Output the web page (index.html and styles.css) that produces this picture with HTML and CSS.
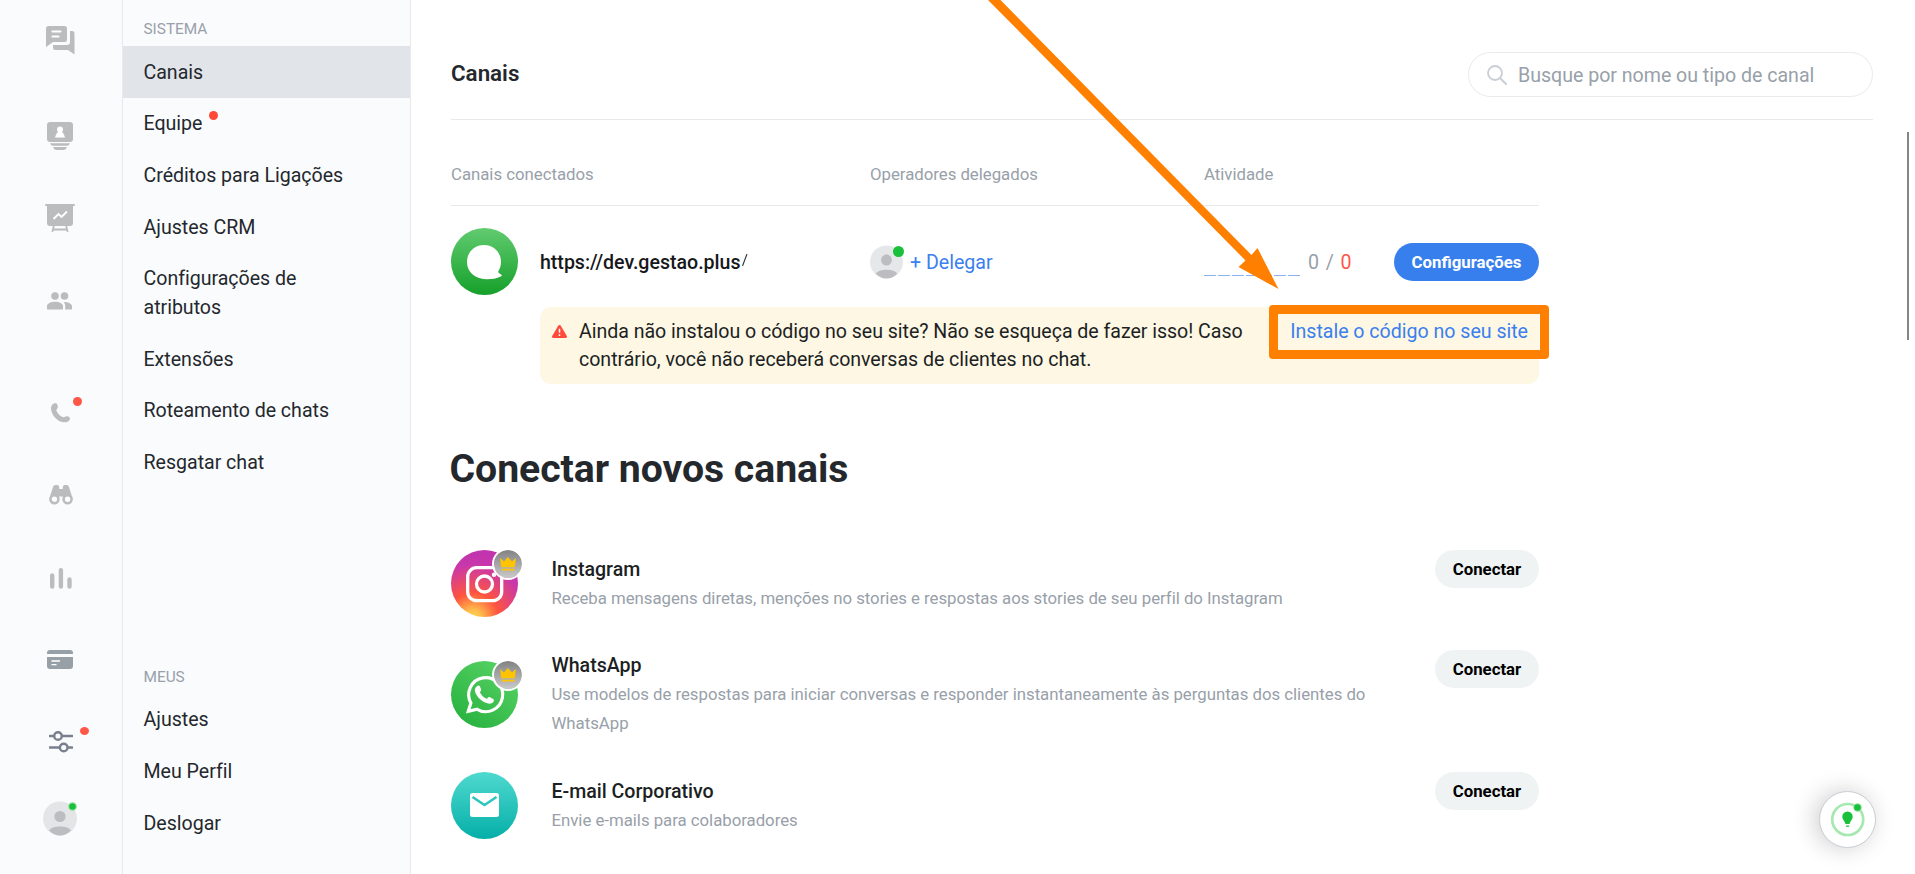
FILE: index.html
```html
<!DOCTYPE html>
<html lang="pt-BR">
<head>
<meta charset="utf-8">
<title>Canais</title>
<link rel="stylesheet" href="styles.css">
</head>
<body>
<div class="app">
  <nav class="rail">
    <a class="rail-item rail-chats"><svg width="30" height="30" viewBox="0 0 30 30"><path fill="#bbbcbe" d="M3.500 1h16a2.500 2.500 0 0 1 2.500 2.500v11a2.500 2.500 0 0 1-2.500 2.500H8L1 22V3.500A2.500 2.500 0 0 1 3.500 1Z"/><path d="M7.500 6.500h8M7.500 11.500h6" stroke="#fff" stroke-width="2.200" stroke-linecap="round"/><path fill="#bbbcbe" d="M25 6h2a2.500 2.500 0 0 1 2.500 2.500v21L23 25H10.500A2.500 2.500 0 0 1 8 22.500V20h14a3 3 0 0 0 3-3Z"/></svg></a>
    <a class="rail-item rail-contacts"><svg width="26" height="28" viewBox="0 0 26 28"><rect width="26" height="20" rx="3" fill="#bbbcbe"/><circle cx="13" cy="7.500" r="3" fill="#fff"/><path fill="#fff" d="M11 10h4q2.800 2.200 3 5.500H8q.2-3.300 3-5.500Z"/><path fill="#bbbcbe" d="M3 21.200h20q-1 2.600-3 2.600H6q-2 0-3-2.600ZM6 25h14q-1 3-3 3H9q-2 0-3-3Z"/></svg></a>
    <a class="rail-item rail-board"><svg width="30" height="28" viewBox="0 0 30 28"><rect width="30" height="2" rx="1" fill="#bbbcbe"/><path fill="#bbbcbe" d="M2 1h26v18a3 3 0 0 1-3 3H5a3 3 0 0 1-3-3Z"/><path d="m8.500 15 5-5 3 3 5.500-5.500" fill="none" stroke="#fff" stroke-width="1.900"/><path d="m9 21-1.600 7M21 21l1.600 7M8 25.500h14" stroke="#bbbcbe" stroke-width="1.800"/></svg></a>
    <a class="rail-item rail-team"><svg width="25" height="18" viewBox="0 0 25 18"><circle cx="8" cy="4" r="3.800" fill="#bbbcbe"/><circle cx="17.500" cy="4" r="3.800" fill="#bbbcbe"/><path fill="#bbbcbe" d="M0 17.500V14c0-2.700 4.600-4.200 8-4.200s8 1.500 8 4.200v3.500ZM17 10c3.500 0 8 1.500 8 4.200v3.300h-6.800V14c0-1.800-.6-3-1.800-4Z"/></svg></a>
    <a class="rail-item rail-phone"><svg width="20" height="20" viewBox="0 0 20 20"><path fill="#bbbcbe" d="M4.300.3c1.200 0 2 .8 2.400 2.400.3 1.300.1 2.300-.7 3.200-.7.800-.8 1.400-.2 2.500 1.300 2.400 3.200 4.200 5.700 5.500 1 .5 1.600.4 2.300-.2 1-.7 2.100-.7 3.300-.3 1.600.6 2.300 1.600 1.700 3-.6 1.800-2.600 2.900-5 2.900C7 19.300.2 12.500 0 5.500 0 2.800 1.800.2 4.300.3Z"/></svg><i class="dot dot-phone"></i></a>
    <a class="rail-item rail-visitors"><svg width="24" height="20" viewBox="0 0 24 20"><path fill="#bbbcbe" d="M4 2A2.600 2.600 0 0 1 6.500 0h1.300a2.300 2.300 0 0 1 2.400 2v2h3.600V2a2.300 2.300 0 0 1 2.400-2h1.300A2.600 2.600 0 0 1 20 2l3.300 10.500L18.500 15 14 12.500V11.500h-4v1L5.500 15 .7 12.500Z"/><circle cx="5.400" cy="14.200" r="4" fill="#fff" stroke="#bbbcbe" stroke-width="2.600"/><circle cx="18.600" cy="14.200" r="4" fill="#fff" stroke="#bbbcbe" stroke-width="2.600"/></svg></a>
    <a class="rail-item rail-stats"><svg width="22" height="21" viewBox="0 0 22 21"><path d="M2.200 7.500v11M10.900 2.300v16.300M19.500 11.500v7" stroke="#bbbcbe" stroke-width="4.400" stroke-linecap="round"/></svg></a>
    <a class="rail-item rail-card"><svg width="26" height="19" viewBox="0 0 26 19"><path fill="#98a0a7" d="M3 0h20a3 3 0 0 1 3 3v1H0V3a3 3 0 0 1 3-3ZM0 7h26v9a3 3 0 0 1-3 3H3a3 3 0 0 1-3-3Z"/><path d="M5 11h7.500M5 14.700h4" stroke="#fff" stroke-width="1.300" stroke-linecap="round"/></svg></a>
    <a class="rail-item rail-settings"><svg width="24" height="22" viewBox="0 0 24 22"><path d="M1 5h4M13 5h10M1 16.500h9M19 16.500h4" stroke="#787f8d" stroke-width="2.600" stroke-linecap="round"/><circle cx="9" cy="5" r="3.800" fill="none" stroke="#787f8d" stroke-width="2.400"/><circle cx="14.700" cy="16.500" r="3.800" fill="none" stroke="#787f8d" stroke-width="2.400"/></svg><i class="dot dot-settings"></i></a>
    <a class="rail-item rail-avatar"><svg width="34" height="35" viewBox="0 0 34 34"><circle cx="17" cy="17" r="17" fill="#e4e5e7"/><circle cx="17" cy="15" r="5.600" fill="#bcbcc1"/><path fill="#bcbcc1" d="M6 29c3-5.500 19-5.500 22 0q-11 10-22 0Z"/></svg><svg class="online" width="9" height="9" viewBox="0 0 9 9"><circle cx="4.500" cy="4.500" r="4" fill="#b5ecbf" stroke="#6fd981" stroke-dasharray="1 1"/><circle cx="4.500" cy="4.500" r="3.300" fill="#18c139"/></svg></a>
  </nav>

  <aside class="menu">
    <div class="menu-title">SISTEMA</div>
    <a class="menu-item active">Canais</a>
    <a class="menu-item"><span class="marked">Equipe<i class="dot dot-menu"></i></span></a>
    <a class="menu-item">Créditos para Ligações</a>
    <a class="menu-item">Ajustes CRM</a>
    <a class="menu-item">Configurações de<br>atributos</a>
    <a class="menu-item">Extensões</a>
    <a class="menu-item">Roteamento de chats</a>
    <a class="menu-item">Resgatar chat</a>
    <div class="menu-title menu-title-own">MEUS</div>
    <a class="menu-item">Ajustes</a>
    <a class="menu-item">Meu Perfil</a>
    <a class="menu-item">Deslogar</a>
  </aside>

  <main class="main">
    <header class="header">
      <h2 class="title">Canais</h2>
      <div class="search">
        <svg width="20" height="20" viewBox="0 0 20 20"><circle cx="8" cy="8" r="7" fill="none" stroke="#c9ced6" stroke-width="1.800"/><path d="m13 13 6 6" stroke="#c9ced6" stroke-width="1.900" stroke-linecap="round"/></svg>
        <span class="search-text">Busque por nome ou tipo de canal</span>
      </div>
    </header>

    <section class="content">
      <div class="grid table-head">
        <span>Canais conectados</span><span>Operadores delegados</span><span>Atividade</span>
      </div>
      <div class="grid channel">
        <div class="site">
          <svg class="logo" width="67" height="67" viewBox="0 0 67 67"><defs><linearGradient id="gGreen" x2="0" y2="1"><stop stop-color="#61cb70"/><stop offset="1" stop-color="#16a02a"/></linearGradient></defs><circle cx="33.500" cy="33.500" r="33.500" fill="url(#gGreen)"/><path fill="#fff" d="M33 17c9.800 0 17 7.300 17 17 0 4-1.300 7.300-3 10q1.300 1.700 3.500 2.800.7 1.200-.7 1.700C45.500 50.800 39.500 51.300 35 51.200 24 51 16 44 16 34c0-9.700 7.200-17 17-17Z"/></svg>
          <span class="url">https://dev.gestao.plus</span><svg class="slash" width="8" height="15" viewBox="0 0 8 15"><path d="M7 0 2.500 12" stroke="#33373d" stroke-width="1.100"/></svg>
        </div>
        <div class="operators">
          <span class="operator"><svg width="33" height="34" viewBox="0 0 34 34"><circle cx="17" cy="17" r="17" fill="#e6e7e9"/><circle cx="17" cy="15" r="5.600" fill="#bcbcc1"/><path fill="#bcbcc1" d="M6 29c3-5.500 19-5.500 22 0q-11 10-22 0Z"/></svg><i class="present"></i></span>
          <a class="link delegate">+ Delegar</a>
        </div>
        <div class="activity">
          <span class="bars"><i></i><i></i><i></i><i></i><i></i><i></i><i></i></span>
          <span class="counts">0 / <b>0</b></span>
        </div>
        <button class="btn btn-primary">Configurações</button>
      </div>

      <div class="notice">
        <svg class="warn" width="15" height="13" viewBox="0 0 15 13"><path fill="#ff4a39" d="M6.200.8a1.500 1.500 0 0 1 2.600 0l6 10.200a1.300 1.300 0 0 1-1.200 2H1.400a1.300 1.300 0 0 1-1.200-2Z"/><path d="M7.500 3.700v4M7.500 9.300v1.600" stroke="#fff" stroke-width="1.500"/></svg>
        <p class="notice-text">Ainda não instalou o código no seu site? Não se esqueça de fazer isso! Caso<br>contrário, você não receberá conversas de clientes no chat.</p>
        <a class="link notice-link">Instale o código no seu site</a>
        <div class="highlight"></div>
      </div>

      <h1 class="heading">Conectar novos canais</h1>

      <ul class="channels">
        <li class="item">
          <div class="badge-icon"><svg width="67" height="67" viewBox="0 0 67 67"><defs><radialGradient id="gInsta" cx=".33" cy="1.020" r=".95"><stop stop-color="#ffd24f"/><stop offset=".12" stop-color="#ffc14d"/><stop offset=".4" stop-color="#ff543e"/><stop offset=".85" stop-color="#c837ab"/><stop offset="1" stop-color="#c233ae"/></radialGradient></defs><circle cx="33.500" cy="33.500" r="33.500" fill="url(#gInsta)"/><rect x="16.700" y="17.700" width="34" height="33" rx="9" fill="none" stroke="#fff" stroke-width="3.300"/><circle cx="33.500" cy="34" r="8" fill="none" stroke="#fff" stroke-width="3.300"/><circle cx="43" cy="24.700" r="2.200" fill="#fff"/></svg><span class="crown"><svg width="16" height="14" viewBox="0 0 16 14"><path fill="#ffc300" d="m0 1 4 3.500L7.800 0 12 4.500 16 1l-1.200 9.200H1.200ZM1.800 11.700h12.600v1.900H1.800Z"/></svg></span></div>
          <div class="item-text"><div class="item-title">Instagram</div><div class="item-desc">Receba mensagens diretas, menções no stories e respostas aos stories de seu perfil do Instagram</div></div>
          <button class="btn">Conectar</button>
        </li>
        <li class="item item-whatsapp">
          <div class="badge-icon"><svg width="67" height="67" viewBox="0 0 67 67"><defs><linearGradient id="gWa" x1=".8" y1=".1" x2=".2" y2=".9"><stop stop-color="#54d062"/><stop offset="1" stop-color="#2bb441"/></linearGradient></defs><circle cx="33.500" cy="33.500" r="33.500" fill="url(#gWa)"/><path fill="none" stroke="#fff" stroke-width="3.200" d="m17.300 50.300 2.600-8.300a17 17 0 1 1 6.200 6.300Z"/><path fill="#fff" d="M25.800 25.200c1.200-1.200 2.700-1 3.300.5l1 2.600c.4 1-.1 1.500-1.200 3 1.400 3 3.700 5.300 7 6.500 1.600-1.900 2-2.100 3.200-1.500l3 1.700c1.200.6 1 1.800.2 3-1 1.500-3.300 2-5 1.600-6.700-1.500-12.200-7.300-13.300-12.300-.5-2 .4-4 1.800-5.100Z"/></svg><span class="crown"><svg width="16" height="14" viewBox="0 0 16 14"><path fill="#ffc300" d="m0 1 4 3.500L7.800 0 12 4.500 16 1l-1.200 9.200H1.200ZM1.800 11.700h12.600v1.900H1.800Z"/></svg></span></div>
          <div class="item-text"><div class="item-title">WhatsApp</div><div class="item-desc">Use modelos de respostas para iniciar conversas e responder instantaneamente às perguntas dos clientes do WhatsApp</div></div>
          <button class="btn">Conectar</button>
        </li>
        <li class="item">
          <div class="badge-icon"><svg width="67" height="67" viewBox="0 0 67 67"><defs><linearGradient id="gMail" x2="0" y2="1"><stop stop-color="#4fd9cf"/><stop offset="1" stop-color="#04afa8"/></linearGradient></defs><circle cx="33.500" cy="33.500" r="33.500" fill="url(#gMail)"/><rect x="19" y="21" width="29" height="24" rx="2.500" fill="#fff"/><path d="m21.500 25 12 8 12-8" fill="none" stroke="#2dc6be" stroke-width="2.600"/></svg></div>
          <div class="item-text"><div class="item-title">E-mail Corporativo</div><div class="item-desc">Envie e-mails para colaboradores</div></div>
          <button class="btn">Conectar</button>
        </li>
      </ul>
    </section>
  </main>
</div>

<svg class="arrow" width="300" height="292" viewBox="984 0 300 292"><path fill="#ff8000" d="M988 0h12.500l251 255 6-7 21 41-40-22 7-6.500Z"/></svg>
<div class="scrollbar"></div>
<div class="helper"><svg width="57" height="57" viewBox="0 0 57 57"><circle cx="28.700" cy="28.500" r="15.500" fill="none" stroke="#a6e8b0" stroke-width="2.700"/><path fill="#18c139" d="M28.500 20.500a5.200 5.200 0 0 1 5.200 5.400c0 2.700-2.500 3.900-3.200 7h-4c-.7-3.100-3.200-4.300-3.200-7a5.200 5.200 0 0 1 5.200-5.400ZM27 34.500h3.200v1.300H27Z"/><circle cx="38.500" cy="16.500" r="4.200" fill="#8fe39d"/><circle cx="38.500" cy="16.500" r="3.300" fill="#18c139"/></svg></div>
</body>
</html>
```
FILE: styles.css
```css
* { box-sizing: border-box; }
body { margin: 0; height: 874px; overflow: hidden; background: #fff; font-family: Roboto, "Liberation Sans", sans-serif; font-size: 19.600px; letter-spacing: -.02px; color: #24282d; }
svg { display: block; flex: none; }

.app { display: flex; height: 874px; }

.rail { width: 123px; padding-top: 25px; background: #fafbfd; border-right: 1px solid #e7e9eb; display: flex; flex-direction: column; }
.rail-item { position: relative; margin-left: 47px; align-self: flex-start; }
.rail-chats { margin-left: 45px; }
.rail-contacts { margin-top: 67px; }
.rail-board { margin: 54px 0 0 45px; }
.rail-team { margin-top: 60px; }
.rail-phone { margin: 93px 0 0 51px; }
.rail-visitors { margin: 62px 0 0 49px; }
.rail-stats { margin: 63px 0 0 50px; }
.rail-card { margin-top: 61px; }
.rail-settings { margin: 62px 0 0 49px; }
.rail-avatar { margin: 48px 0 0 43px; }

.dot { position: absolute; width: 9px; height: 9px; border-radius: 50%; background: #ff5747; }
.dot-phone { left: 22px; top: -6px; }
.dot-settings { left: 31px; top: -4px; height: 8px; }
.dot-menu { left: 65px; top: -1px; background: #ff4a39; }
.online { position: absolute; left: 25px; top: 1px; }

.menu { width: 288px; padding-top: 12px; background: #fafbfd; border-right: 1px solid #e7e9eb; }
.menu-title { padding-left: 20.500px; height: 34px; line-height: 35px; font-size: 15.400px; color: #98a0a9; }
.menu-title-own { margin-top: 172px; }
.menu-item { display: block; padding: 12.700px 20.500px 10.150px; line-height: 28.800px; }
.menu-item.active { background: #e1e4e9; }
.marked { position: relative; }

.main { flex: 1; padding-left: 40px; }
.header { width: 1422px; height: 120px; display: flex; justify-content: space-between; padding-top: 52px; border-bottom: 1px solid #e8e9eb; }
.title { margin: 7px 0 0; font-size: 22.400px; line-height: 28px; font-weight: 600; }
.search { width: 405px; height: 45px; border: 1px solid #e8eaed; border-radius: 23px; display: flex; align-items: center; padding-left: 18px; gap: 11px; color: #98a0a9; }
.search-text { padding-top: 2px; }

.content { width: 1088px; }
.grid { display: grid; grid-template-columns: 419px 334px 190px 145px; align-items: center; }
.table-head { height: 86px; padding-top: 22px; border-bottom: 1px solid #e8e9eb; font-size: 16.800px; color: #98a0a9; }
.channel { height: 101px; padding: 22px 0 12px; }
.site { display: flex; align-items: center; }
.logo { margin-right: 22px; }
.url { padding-top: 1px; font-weight: 500; color: #16181b; }
.slash { margin-left: 0; }
.operators { display: flex; align-items: center; gap: 7px; }
.operator { position: relative; }
.present { position: absolute; left: 23px; top: 1px; width: 11px; height: 11px; border-radius: 50%; background: #18c139; }
.link { color: #3a80ee; }
.delegate { padding-top: 2px; }
.activity { display: flex; align-items: flex-end; gap: 8px; padding-top: 1px; color: #98a0a9; }
.bars { display: flex; gap: 2px; margin-bottom: -2px; }
.bars i { width: 12px; height: 1px; background: #89b1f2; }
.counts { letter-spacing: .9px; }
.counts b { font-weight: 400; color: #ff5747; }
.btn { height: 38px; width: 104px; flex: none; padding: 0; border: 0; border-radius: 19px; background: #eff3f4; color: #000; font: 700 16.800px Roboto, "Liberation Sans", sans-serif; }
.btn-primary { width: 145px; background: #377fed; color: #fff; }

.notice { position: relative; display: flex; margin-left: 89px; height: 77px; padding: 11px 11px 0 12px; border-radius: 11px; background: #fdf7e4; }
.warn { margin-top: 7px; }
.notice-text { margin: 0 0 0 12px; line-height: 28px; color: #1c1f23; letter-spacing: -.04px; }
.notice-link { margin-left: auto; line-height: 28px; }
.highlight { position: absolute; right: -10px; top: -2px; width: 280px; height: 54px; border: 9px solid #ff8000; border-radius: 4px; }

.heading { margin: 61px 0 0 -1.500px; font-size: 39.200px; line-height: 48px; font-weight: 700; letter-spacing: -.04px; }
.channels { list-style: none; margin: 57px 0 0; padding: 0; }
.item { display: flex; height: 100px; }
.item-whatsapp { height: 122px; }
.badge-icon { position: relative; width: 67px; height: 67px; flex: none; }
.item-whatsapp .badge-icon { margin-top: 11px; }
.crown { position: absolute; left: 41px; top: -2px; width: 32px; height: 32px; border-radius: 50%; border: 2px solid #fff; background: linear-gradient(#828282, #c9c9c9) padding-box; display: flex; align-items: center; justify-content: center; }
.item-text { flex: 1; margin: 5px 0 0 33.500px; padding-right: 55px; line-height: 29px; }
.item-whatsapp .item-text { margin-top: 1px; }
.item-title { font-weight: 500; color: #1c1f23; }
.item-desc { font-size: 16.800px; color: #98a0a9; }

.arrow { position: absolute; left: 984px; top: 0; }
.scrollbar { position: absolute; left: 1907px; top: 132px; width: 2px; height: 208px; background: #858585; }
.helper { position: absolute; left: 1819px; top: 791px; width: 57px; height: 57px; border-radius: 50%; background: #fff; border: 1px solid #c9cdd4; box-shadow: -4px 0 24px rgba(0, 0, 0, .2); display: flex; align-items: center; justify-content: center; }
```
